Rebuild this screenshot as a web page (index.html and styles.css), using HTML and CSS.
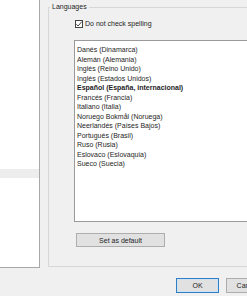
FILE: index.html
```html
<!DOCTYPE html>
<html lang="es">
  <head>
    <meta charset="UTF-8" />
    <meta name="viewport" content="width=device-width, initial-scale=1.0" />
    <title>Languages</title>
    <link rel="stylesheet" href="styles.css">
  </head>

  <body>
    <div class="main">
      <div class="sidebar">
        <div class="sidebar-row"></div>
      </div>
      <div class="panel">
        <fieldset class="group">
          <legend>Languages</legend>
          <div class="group-body">
            <label class="check-row">
              <span class="check">
                <svg width="8" height="8" viewBox="0 0 8 8">
                  <polyline points="1.3,4.2 3.1,6 6.8,1.6" fill="none" stroke="#333" stroke-width="0.9" />
                </svg>
              </span>
              Do not check spelling
            </label>
            <ul class="list">
              <li>Danés (Dinamarca)</li>
              <li>Alemán (Alemania)</li>
              <li>Inglés (Reino Unido)</li>
              <li>Inglés (Estados Unidos)</li>
              <li class="current">Español (España, internacional)</li>
              <li>Francés (Francia)</li>
              <li>Italiano (Italia)</li>
              <li>Noruego Bokmål (Noruega)</li>
              <li>Neerlandés (Países Bajos)</li>
              <li>Portugués (Brasil)</li>
              <li>Ruso (Rusia)</li>
              <li>Eslovaco (Eslovaquia)</li>
              <li>Sueco (Suecia)</li>
            </ul>
            <button class="btn btn-default-set">Set as default</button>
          </div>
        </fieldset>
      </div>
    </div>
    <div class="footer">
      <button class="btn btn-ok">OK</button>
      <button class="btn">Cancel</button>
    </div>
  </body>
</html>
```

FILE: styles.css
```css
html,
body {
  margin: 0;
  width: 247px;
  height: 296px;
  overflow: hidden;
}

body {
  background: #f0f0f0;
  font-family: "Liberation Sans", Arial, sans-serif;
  font-size: 7px;
  color: #1e1e1e;
}

.main {
  display: flex;
  height: 268px;
}

.sidebar {
  flex-shrink: 0;
  width: 40px;
  box-sizing: border-box;
  background: #fff;
  border-right: 1px solid #a8a8a8;
  border-bottom: 1px solid #a8a8a8;
}

.sidebar-row {
  margin-top: 169px;
  height: 9px;
  background: #ededed;
}

.panel {
  flex-shrink: 0;
  padding-left: 8px;
}

.group {
  margin: 2px 0 0;
  padding: 0 0 19px;
  width: 260px;
  border: 1px solid #d7d7d7;
}

.group legend {
  margin-left: 1px;
  padding: 0 2px;
  line-height: 10px;
}

.group-body {
  padding-left: 25px;
}

.check-row {
  display: flex;
  align-items: center;
  gap: 2px;
  margin: 7px 0 0 1px;
  height: 9px;
}

.check {
  display: flex;
  width: 8px;
  height: 8px;
  box-sizing: border-box;
  border: 1px solid #444;
  background: #fff;
  align-items: center;
  justify-content: center;
}

.check svg {
  flex-shrink: 0;
}

.list {
  margin: 12px 0 0;
  padding: 4px 0 0 2px;
  height: 182px;
  box-sizing: border-box;
  list-style: none;
  background: #fff;
  border: 1px solid #9a9a9a;
}

.list li {
  line-height: 9.5px;
  white-space: nowrap;
}

.list .current {
  font-weight: bold;
}

.btn {
  flex-shrink: 0;
  font-family: inherit;
  font-size: 7px;
  color: #1e1e1e;
  background: #e1e1e1;
  border: 1px solid #adadad;
  padding: 0;
  height: 15px;
  width: 43px;
}

.btn-default-set {
  display: block;
  margin: 11px 0 0 2px;
  width: 89px;
  height: 14px;
}

.footer {
  display: flex;
  gap: 7px;
  padding: 10px 0 0 176px;
}

.btn-ok {
  border-color: #2f7ec4;
  box-shadow: inset 0 0 0 1px #cfe3f4;
}
```
